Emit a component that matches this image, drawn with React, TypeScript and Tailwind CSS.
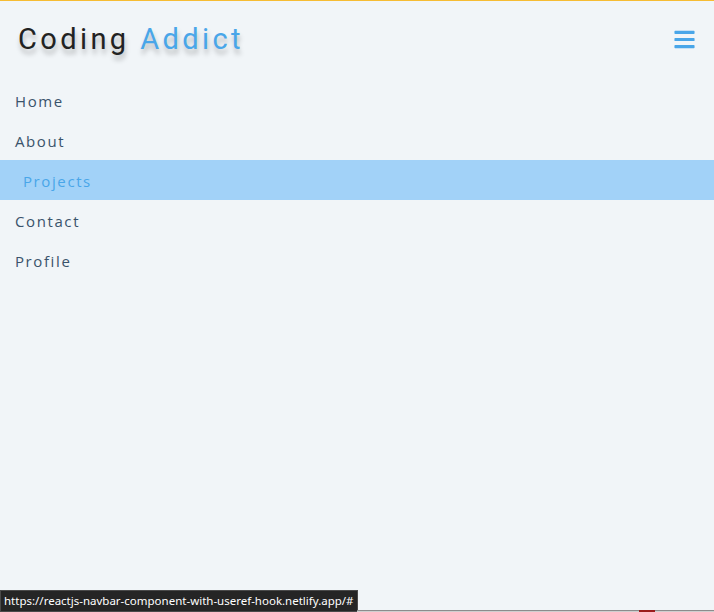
import { FaBars } from "react-icons/fa";

const LINKS = ["Home", "About", "Projects", "Contact", "Profile"];

export default function App() {
  return (
    <div className="relative h-[612px] w-full overflow-hidden bg-[#f1f5f8] font-['Open_Sans',sans-serif]">
      {/* top accent */}
      <div className="h-px bg-[#f6bc33]" />

      <nav>
        <div className="flex h-[79px] items-center justify-between pl-[18px] pr-[18px]">
          <h1
            className="-mt-[1px] font-['Roboto',sans-serif] text-[29px] font-normal tracking-[3.4px] text-[#222]"
            style={{ textShadow: "1px 5px 5px rgba(0,0,0,0.25)" }}
          >
            Coding <span className="text-[#49a6e9]">Addict</span>
          </h1>
          <button className="-mt-[3px] text-[#49a6e9]">
            <FaBars size={23} />
          </button>
        </div>

        <ul>
          {LINKS.map((link) => {
            const active = link === "Projects";
            return (
              <li key={link}>
                <a
                  href="#"
                  className={
                    active
                      ? "flex h-10 items-center bg-[#a2d2f8] pl-[23px] pt-[2px] text-[15px] tracking-[1.6px] text-[#49a6e9]"
                      : "flex h-10 items-center pl-[15px] pt-[2px] text-[15px] tracking-[1.6px] text-[#3a536b]"
                  }
                >
                  {link}
                </a>
              </li>
            );
          })}
        </ul>
      </nav>

      {/* browser status bubble */}
      <div className="absolute bottom-0 left-0 flex h-[22px] items-center border border-[#4a4a4a] bg-[#252525] px-[3px] font-['Noto_Sans',sans-serif] text-[11.5px] text-white">
        https://reactjs-navbar-component-with-useref-hook.netlify.app/#
      </div>
      <div className="absolute bottom-0 left-[357px] right-0 flex h-[2px] flex-col">
        <div className="h-px bg-[#8c8c8c]" />
        <div className="h-px bg-[#cfcfcf]" />
      </div>
      <div className="absolute bottom-0 left-[639px] h-[2px] w-[16px] bg-[#9b1c1c]" />
    </div>
  );
}
